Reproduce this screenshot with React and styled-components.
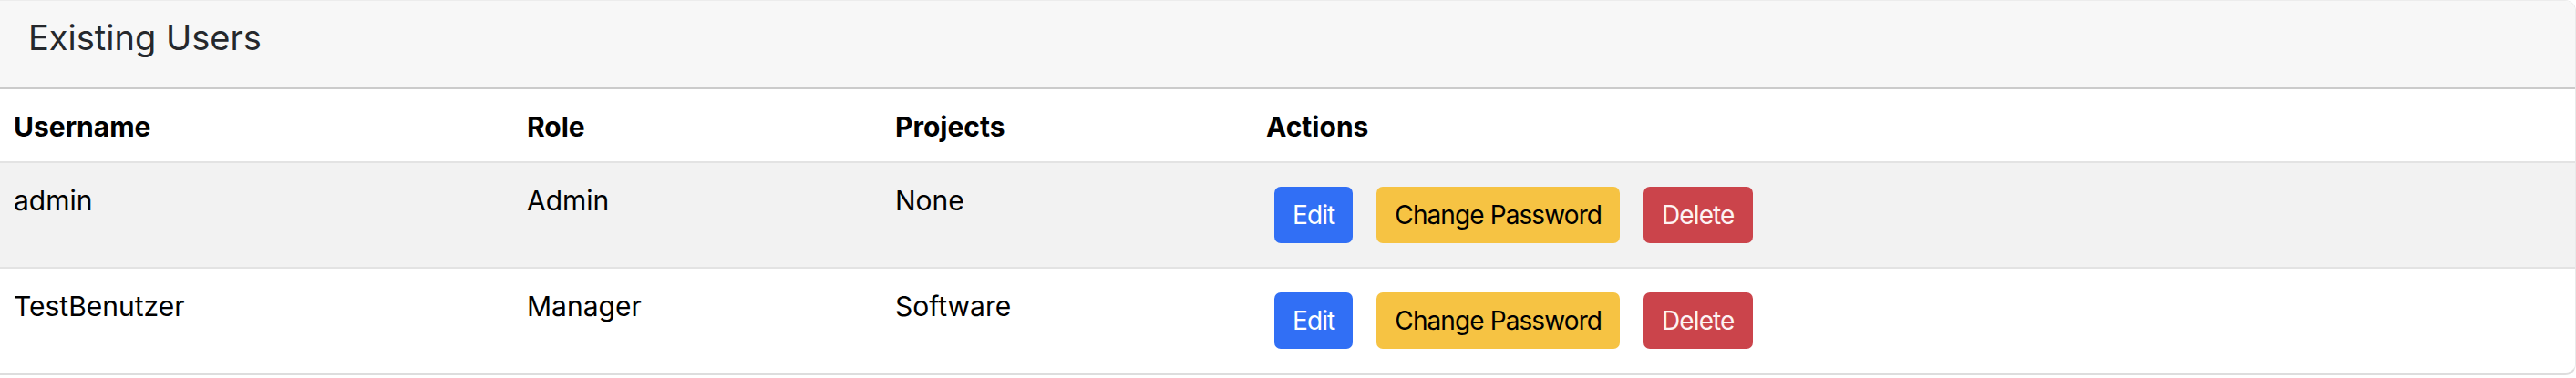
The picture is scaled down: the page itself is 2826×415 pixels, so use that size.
import styled, { createGlobalStyle } from "styled-components"

const GlobalStyle = createGlobalStyle`
  html, body {
    margin: 0;
    padding: 0;
    background: #ffffff;
  }
  body {
    font-family: Inter, "Noto Sans", "Liberation Sans", sans-serif;
    color: #000;
  }
`

const Card = styled.section`
  border-top: 1px solid #ececec;
  border-right: 1px solid #e9e9e9;
  border-bottom: 3px solid #dddddd;
  border-radius: 0 12px 12px 0;
  overflow: hidden;
  background: #fff;
`

const CardHeader = styled.header`
  background: #f7f7f7;
  border-bottom: 2px solid #cbcbcb;
  padding: 17px 31px 32px;
`

const Title = styled.h5`
  margin: 0;
  font-size: 38px;
  line-height: 46px;
  font-weight: 400;
  color: #25282c;
`

const Table = styled.table`
  width: 100%;
  border-collapse: collapse;
  table-layout: fixed;
`

const HeadCell = styled.th`
  text-align: left;
  font-size: 30px;
  line-height: 43px;
  font-weight: 700;
  padding: 20px 15px 16px;
  vertical-align: top;
  border-bottom: 2px solid #e3e3e3;
`

const Row = styled.tr`
  background: ${(p) => (p.$striped ? "#f2f2f2" : "#ffffff")};
  border-bottom: ${(p) => (p.$last ? "none" : "2px solid #e3e3e3")};
`

const Cell = styled.td`
  font-size: 30px;
  line-height: 43px;
  padding: 20px 15px 0;
  vertical-align: top;
`

const ActionCell = styled.td`
  padding: 26px 24px;
  vertical-align: middle;
`

const Actions = styled.div`
  display: flex;
  gap: 26px;
`

const variants = {
  primary: { bg: "#316ff5", fg: "#ffffff" },
  warning: { bg: "#f6c343", fg: "#000000" },
  danger: { bg: "#cb444b", fg: "#fdf3f3" },
}

const Button = styled.button`
  height: 62px;
  padding: 0 20px;
  border: none;
  border-radius: 7px;
  font-family: inherit;
  font-size: 28px;
  letter-spacing: -0.9px;
  line-height: 1;
  background: ${(p) => variants[p.$variant].bg};
  color: ${(p) => variants[p.$variant].fg};
  cursor: pointer;
`

const users = [
  { name: "admin", role: "Admin", projects: "None" },
  { name: "TestBenutzer", role: "Manager", projects: "Software" },
]

export default function App() {
  return (
    <>
      <GlobalStyle />
      <Card>
        <CardHeader>
          <Title>Existing Users</Title>
        </CardHeader>
        <Table>
          <colgroup>
            <col style={{ width: 563 }} />
            <col style={{ width: 404 }} />
            <col style={{ width: 407 }} />
            <col />
          </colgroup>
          <thead>
            <tr>
              <HeadCell>Username</HeadCell>
              <HeadCell>Role</HeadCell>
              <HeadCell>Projects</HeadCell>
              <HeadCell>Actions</HeadCell>
            </tr>
          </thead>
          <tbody>
            {users.map((u, i) => (
              <Row key={u.name} $striped={i % 2 === 0} $last={i === users.length - 1}>
                <Cell>{u.name}</Cell>
                <Cell>{u.role}</Cell>
                <Cell>{u.projects}</Cell>
                <ActionCell>
                  <Actions>
                    <Button $variant="primary">Edit</Button>
                    <Button $variant="warning">Change Password</Button>
                    <Button $variant="danger">Delete</Button>
                  </Actions>
                </ActionCell>
              </Row>
            ))}
          </tbody>
        </Table>
      </Card>
    </>
  )
}
